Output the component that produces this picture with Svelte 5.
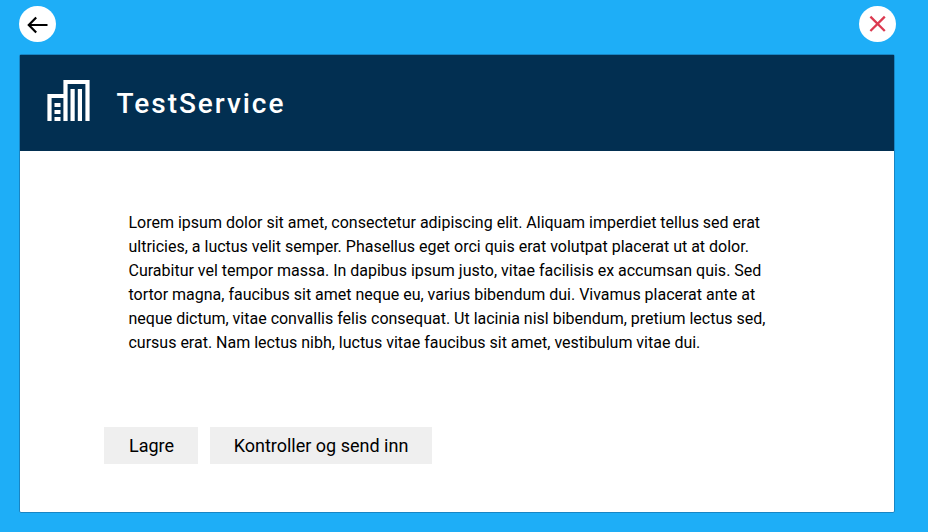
<script>
  const lines = [
    'Lorem ipsum dolor sit amet, consectetur adipiscing elit. Aliquam imperdiet tellus sed erat',
    'ultricies, a luctus velit semper. Phasellus eget orci quis erat volutpat placerat ut at dolor.',
    'Curabitur vel tempor massa. In dapibus ipsum justo, vitae facilisis ex accumsan quis. Sed',
    'tortor magna, faucibus sit amet neque eu, varius bibendum dui. Vivamus placerat ante at',
    'neque dictum, vitae convallis felis consequat. Ut lacinia nisl bibendum, pretium lectus sed,',
    'cursus erat. Nam lectus nibh, luctus vitae faucibus sit amet, vestibulum vitae dui.'
  ];
</script>

<div class="page">
  <nav>
    <button class="round" aria-label="Tilbake">
      <svg width="37" height="36" viewBox="0 0 37 36" fill="none" stroke="#000" stroke-width="2.2">
        <path d="M28.5 19H10M17.2 11.5L9.8 19L17.2 26.5" />
      </svg>
    </button>
    <button class="round" aria-label="Lukk">
      <svg width="37" height="36" viewBox="0 0 37 36" fill="none" stroke="#dc3a50" stroke-width="2.3">
        <path d="M11.4 10.6L25.8 25M25.8 10.6L11.4 25" />
      </svg>
    </button>
  </nav>
  <main>
    <header>
      <svg class="logo" width="43" height="41" viewBox="0 0 43 41" fill="#fff">
        <path d="M.4 41V14H16.4V0H42.6V41H38.4V4H20.6V41H16.4V18H4.6V41Z" />
        <path d="M23.5 9h4.2v32h-4.2zM30.8 9H35v32h-4.2zM7.5 23h6v4h-6zM7.5 30h6v4h-6zM7.5 37h6v4h-6z" />
      </svg>
      <h1>TestService</h1>
    </header>
    <p>{#each lines as line}<span>{line}</span>{/each}</p>
    <div class="actions">
      <button>Lagre</button>
      <button>Kontroller og send inn</button>
    </div>
  </main>
</div>

<style>
  :global(body) { margin: 0; background: #1eaef7; }
  .page {
    box-sizing: border-box;
    height: 532px;
    padding: 6px 33px 0 19px;
    font-family: Roboto, sans-serif;
    color: #000;
    overflow: hidden;
  }
  nav { display: flex; justify-content: space-between; margin-right: -1px; }
  button { border: 0; padding: 0; font-family: inherit; color: inherit; }
  .round { width: 37px; height: 36px; border-radius: 50%; background: #fff; }
  svg { display: block; }
  main {
    box-sizing: border-box;
    height: 459px;
    margin-top: 12px;
    border: 1px solid #1885c4;
    border-radius: 2px;
    background: #fff;
  }
  header {
    display: flex;
    box-sizing: border-box;
    height: 96px;
    padding: 25px 0 0 27px;
    background: #022f51;
    color: #fff;
  }
  h1 {
    margin: 7px 0 0 26.6px;
    font-size: 28px;
    line-height: 33px;
    font-weight: 500;
    letter-spacing: 1.96px;
  }
  p { margin: 60px 0 0 108.5px; font-size: 16px; line-height: 24px; letter-spacing: -0.004px; }
  span { display: block; white-space: nowrap; }
  .actions { display: flex; gap: 12px; margin: 72px 0 0 84px; }
  .actions button {
    height: 37px;
    padding: 0 23.5px 0 24.5px;
    background: #efefef;
    font-size: 18px;
    line-height: 37px;
    white-space: nowrap;
  }
  .actions button:first-child { width: 94px; }
  .actions button:last-child { width: 222px; padding: 0; }
</style>
